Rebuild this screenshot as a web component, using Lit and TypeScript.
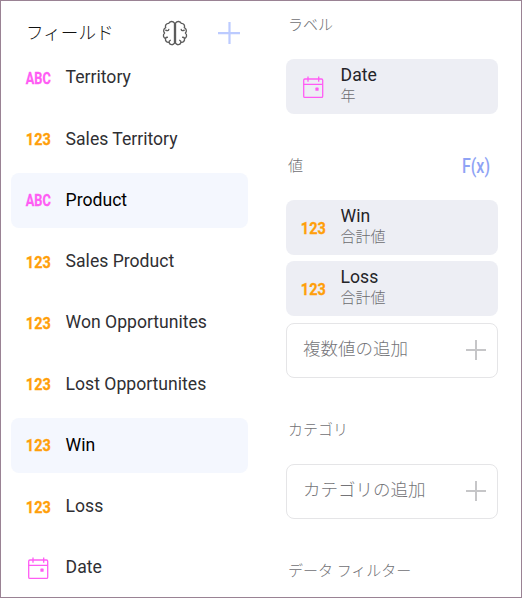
import { LitElement, html, svg, css } from "lit";
import { customElement, property } from "lit/decorators.js";

type Kind = "abc" | "num" | "date";

@customElement("type-icon")
class TypeIcon extends LitElement {
  @property() kind: Kind = "abc";

  static styles = css`
    :host { display: block; width: 26px; height: 26px; }
    svg { display: block; overflow: visible; }
    text { font: 700 17px Roboto, sans-serif; stroke-width: 0.3; }
    .abc { fill: #ff5cf4; stroke: #ff5cf4; }
    .num { fill: #ff9f0a; stroke: #ff9f0a; }
    .cal { fill: none; stroke: #ff5cf4; stroke-width: 1.3; }
    .dot { fill: #ff5cf4; }
  `;

  render() {
    const shape =
      this.kind === "date"
        ? svg`<rect class="cal" x="3.7" y="4" width="19" height="18.4" rx="1.2"></rect>
            <path class="cal" d="M3.5 9.4H22.8M8 1.6V6.8M18.7 1.6V6.8"></path>
            <rect class="dot" x="15.4" y="12.6" width="3.2" height="3.2" rx=".6"></rect>`
        : svg`<text class=${this.kind} x="0.8" y="18.4" textLength="25" lengthAdjust="spacingAndGlyphs">${
            this.kind === "abc" ? "ABC" : "123"
          }</text>`;
    return html`<svg width="26" height="26" viewBox="0 0 26 26">${shape}</svg>`;
  }
}

@customElement("app-root")
class AppRoot extends LitElement {
  static styles = css`
    :host {
      display: flex;
      box-sizing: border-box;
      width: 522px;
      height: 598px;
      overflow: hidden;
      border: 1px solid #9a8294;
      background: #fff;
      color: #2f2f33;
      font: 17.6px/24px Roboto, "Noto Sans CJK JP", sans-serif;
    }
    svg { display: block; overflow: visible; }
    .fields { width: 237px; margin-left: 10px; }
    .head {
      display: flex;
      align-items: center;
      height: 49.25px;
      padding-left: 15px;
    }
    .title { width: 136px; line-height: 24px; margin-top: 15px; font-size: 17.6px; font-weight: 300; color: #111; }
    .head svg { margin-top: 15px; }
    .plus { margin-left: 29px; }
    .list { display: flex; flex-direction: column; gap: 6.25px; }
    .row {
      display: flex;
      align-items: center;
      flex: none;
      gap: 14.6px;
      height: 55px;
      padding-left: 14px;
      border-radius: 8px;
      box-sizing: border-box;
    }
    .row type-icon { margin-top: 2px; }
    .row span { margin-top: -1px; }
    .on { background: #f4f7fe; color: #000; }
    .panel { width: 212px; margin-left: 38px; padding-top: 14px; }
    .label {
      display: flex;
      justify-content: space-between;
      align-items: center;
      height: 20px;
      margin-bottom: 24px;
      padding: 0 7px 0 2px;
      font-size: 15px;
      font-weight: 300;
      color: #707074;
      white-space: nowrap;
    }
    .section { margin-bottom: 42px; }
    .card {
      display: flex;
      gap: 14.6px;
      align-items: center;
      height: 55px;
      margin-bottom: 6px;
      padding-left: 14px;
      border-radius: 8px;
      background: #edeef4;
      box-sizing: border-box;
    }
    .card:last-child { margin-bottom: 0; }
    .card + .add { margin-top: 7px; }
    .card type-icon { margin-top: 2px; }
    .name { line-height: 21px; color: #242428; margin-top: -1px; }
    .sub { font-size: 15px; line-height: 21px; font-weight: 300; color: #6c6c70; }
    .add {
      justify-content: space-between;
      padding: 0 10px 0 16px;
      border: 1px solid #e5e5e7;
      background: #fff;
      color: #747478;
      font-size: 17.5px;
      font-weight: 300;
    }
    .add span { margin-top: -3px; }
    .add svg { margin-top: -1px; }
    .fx text { font: 500 20px Roboto, sans-serif; fill: #8fa3f5; }
  `;

  private fields: [Kind, string, boolean?][] = [
    ["abc", "Territory"],
    ["num", "Sales Territory"],
    ["abc", "Product", true],
    ["num", "Sales Product"],
    ["num", "Won Opportunites"],
    ["num", "Lost Opportunites"],
    ["num", "Win", true],
    ["num", "Loss"],
    ["date", "Date"],
  ];

  private card(kind: Kind, name: string, sub: string) {
    return html`<div class="card">
      <type-icon kind=${kind}></type-icon>
      <div><div class="name">${name}</div><div class="sub">${sub}</div></div>
    </div>`;
  }

  private add(text: string) {
    return html`<div class="card add">
      <span>${text}</span>
      <svg width="22" height="22" viewBox="0 0 22 22">
        <path d="M1 11H21M11 1V21" stroke="#c6c6c8" stroke-width="2"></path>
      </svg>
    </div>`;
  }

  render() {
    return html`
      <div class="fields">
        <div class="head">
          <div class="title">フィールド</div>
          <svg width="26" height="26" viewBox="0 0 26 26" fill="none" stroke="#5c5c5c" stroke-width="1.35" stroke-linecap="round" stroke-linejoin="round">
            <path d="M12.5 3.2C11 .8 7.6 1 6.8 3.4C4.2 3.2 2.8 5.5 3.7 7.7C1.5 8.8 1 11.5 2.6 13.1C.7 14.8 1.2 17.7 3.5 18.5C3.1 21 4.8 22.7 7 22.4C8 25.2 11.2 25.4 12.5 23.2Z"></path>
            <path d="M13.5 3.2C15 .8 18.4 1 19.2 3.4C21.8 3.2 23.2 5.5 22.3 7.7C24.5 8.8 25 11.5 23.4 13.1C25.3 14.8 24.8 17.7 22.5 18.5C22.9 21 21.2 22.7 19 22.4C18 25.2 14.8 25.4 13.5 23.2Z"></path>
            <path d="M3.7 10.2Q6.4 11.4 6.8 9.4M22.3 10.2Q19.6 11.4 19.2 9.4M3.5 18.3Q4 17.2 5.4 17.2M22.5 18.3Q22 17.2 20.6 17.2M7 22.4Q7 20.8 8.3 20.3M19 22.4Q19 20.8 17.7 20.3"></path>
          </svg>
          <svg class="plus" width="24" height="24" viewBox="0 0 24 24">
            <path d="M1 12.2H23M12.5 1V23" stroke="#bccbff" stroke-width="2.2"></path>
          </svg>
        </div>
        <div class="list">
          ${this.fields.map(
            ([kind, name, on]) => html`<div class="row ${on ? "on" : ""}">
              <type-icon kind=${kind}></type-icon><span>${name}</span>
            </div>`
          )}
        </div>
      </div>
      <div class="panel">
        <div class="section">
          <div class="label">ラベル</div>
          ${this.card("date", "Date", "年")}
        </div>
        <div class="section">
          <div class="label">
            <span>値</span>
            <svg class="fx" width="30" height="26" viewBox="0 0 30 26">
              <text x="1" y="19.5" textLength="28" lengthAdjust="spacingAndGlyphs">F(x)</text>
            </svg>
          </div>
          ${this.card("num", "Win", "合計値")} ${this.card("num", "Loss", "合計値")}
          ${this.add("複数値の追加")}
        </div>
        <div class="section">
          <div class="label">カテゴリ</div>
          ${this.add("カテゴリの追加")}
        </div>
        <div class="label">データ フィルター</div>
      </div>
    `;
  }
}
